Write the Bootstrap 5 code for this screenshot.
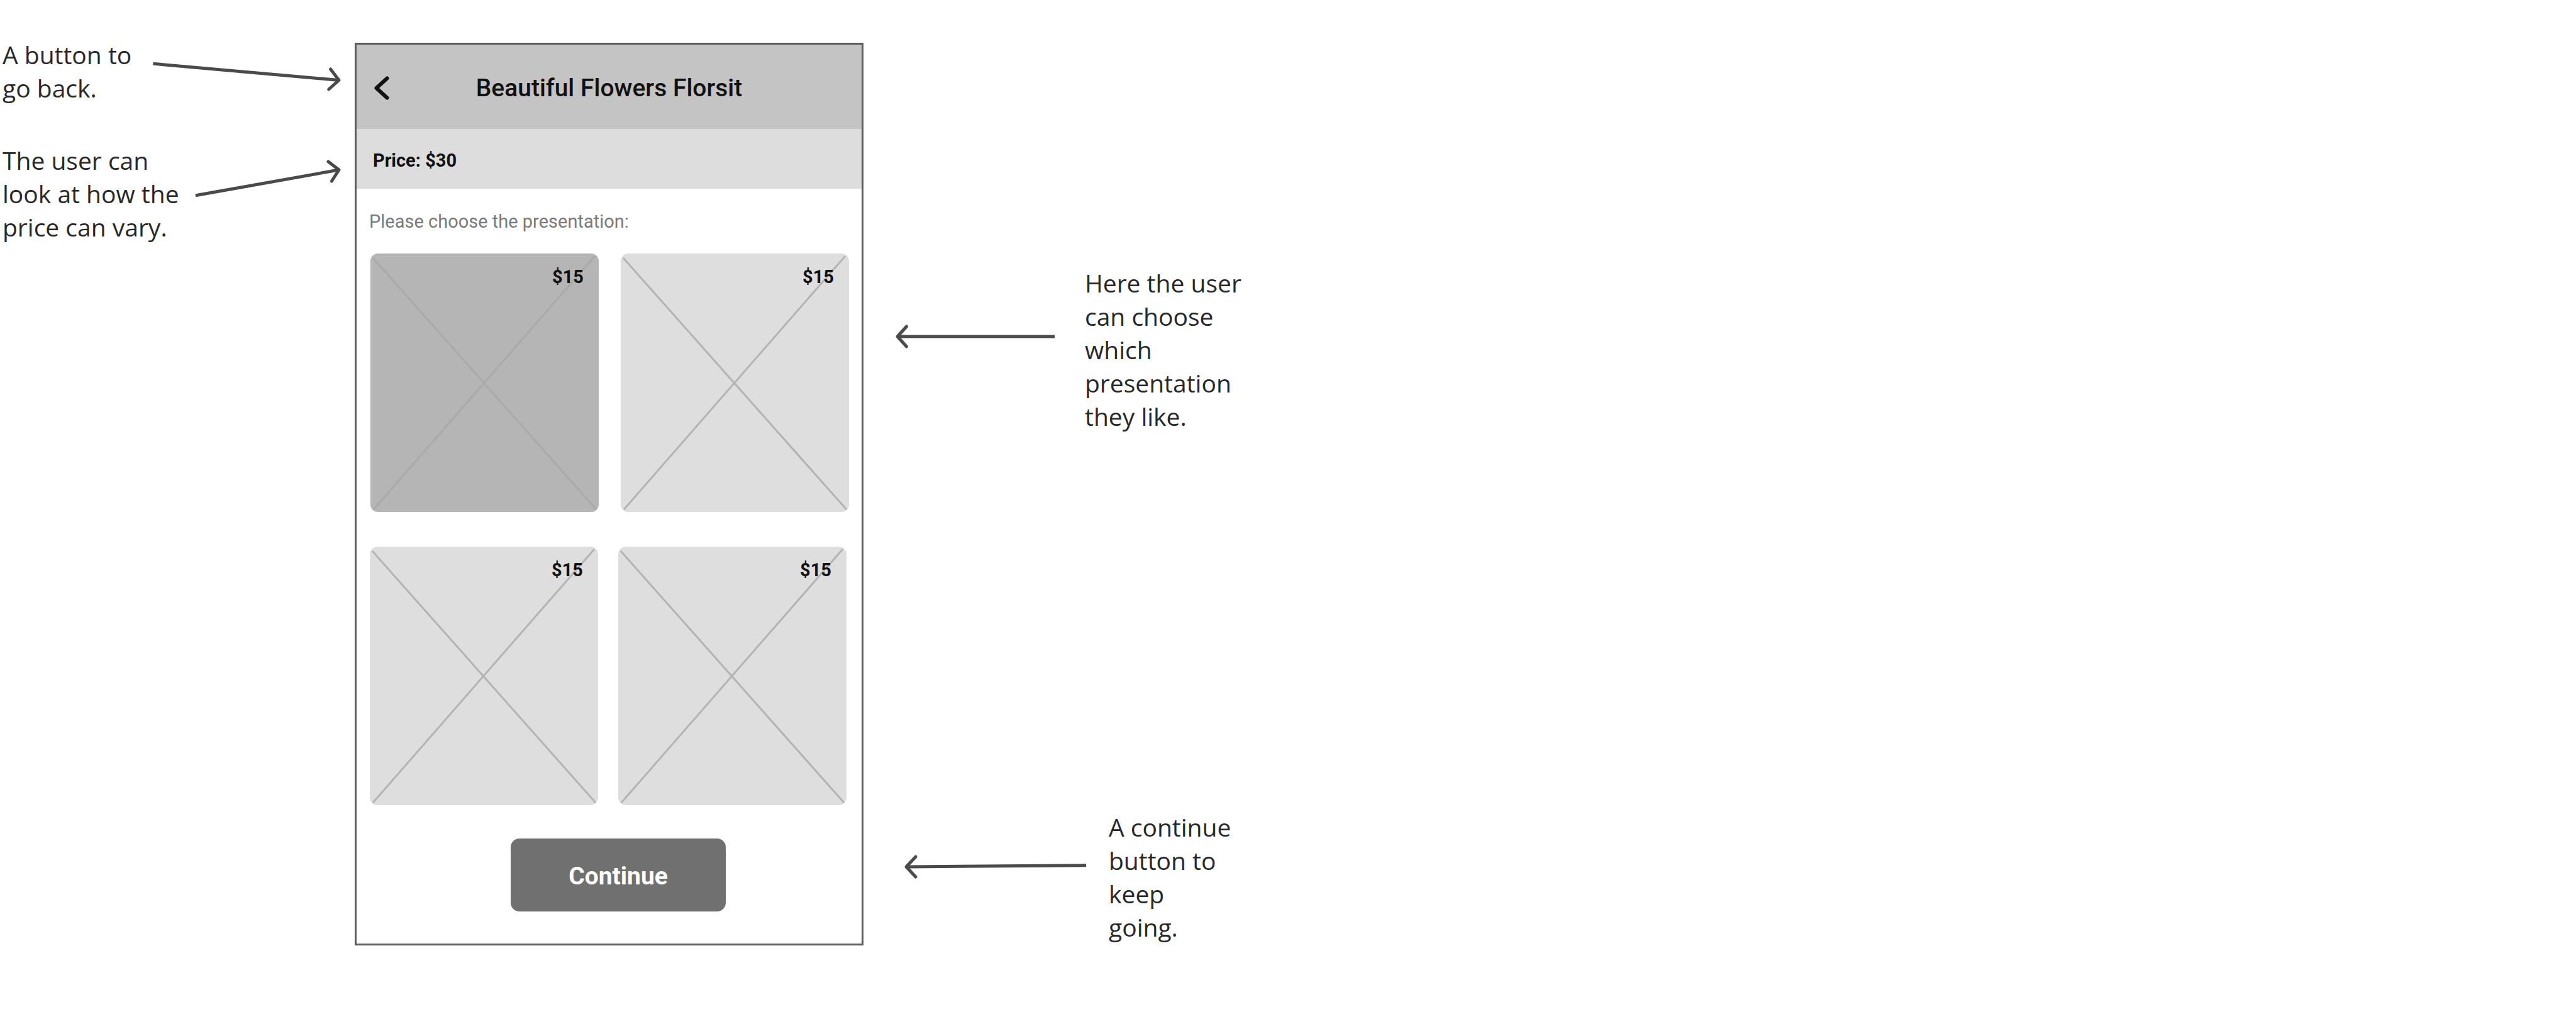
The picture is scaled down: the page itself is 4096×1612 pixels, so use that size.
<!DOCTYPE html>
<html lang="en">
<head>
<meta charset="utf-8">
<meta name="viewport" content="width=device-width, initial-scale=1">
<title>Beautiful Flowers Florsit</title>
<link href="https://cdn.jsdelivr.net/npm/bootstrap@5.3.0/dist/css/bootstrap.min.css" rel="stylesheet">
<style>
  body { background: #fff; }
  .board { display: grid; grid-template-columns: minmax(564px, 564fr) minmax(809px, 809fr) minmax(600px, 2723fr); align-items: start; min-height: 100vh; }

  /* Annotations beside the phone */
  .notes-left { padding: 60px 0 0 4px; gap: 62px; }
  .notes-right { padding-top: 423px; gap: 600px; }
  .note-text { font: 400 39px/53px "Open Sans", sans-serif; color: #282828; white-space: nowrap; }
  .note-back { width: 236px; }
  .note-price { width: 300px; }
  .note-choose { padding-left: 48px; }
  .note-continue { padding-left: 62px; }
  .arrow { flex: none; fill: none; stroke: #4a4a4a; stroke-width: 5; stroke-linejoin: round; }
  .arrow .tip { stroke-linecap: round; }

  /* Phone */
  .phone { margin-top: 68px; border: 3px solid #5c5c5c; background: #fff; font-family: Roboto, sans-serif; color: #111; }
  .topbar { height: 134px; padding: 4px 27px 0; background: #c4c4c4; }
  .topbar h1 { font-size: 39px; line-height: 46px; font-weight: 500; }
  .topbar-side { width: 26px; }
  .back { color: #111; line-height: 0; }
  .price { height: 95px; padding: 6px 26px 0; background: #ddd; font-size: 29px; font-weight: 700; }
  .prompt { padding: 35px 20px 34px; font-size: 29px; line-height: 34px; color: #7a7a7a; }
  .choices-top { gap: 35px; padding: 0 20px 0 22px; margin-bottom: 55px; }
  .choices-bottom { gap: 32px; padding: 0 24px 0 21px; margin-bottom: 53px; }
  .choice { flex: 1 1 0; height: 411px; border-radius: 12px; background: #dedede; color: #111; overflow: hidden; }
  .choice svg { stroke: #b4b4b4; stroke-width: 3; }
  .choice[aria-pressed="true"] { background: #b5b5b5; }
  .choice[aria-pressed="true"] svg { stroke: #aaa; }
  .choice-price { top: 20px; right: 24px; font-size: 29px; line-height: 34px; font-weight: 700; }
  .action { padding-left: 29px; margin-bottom: 51px; }
  .continue { width: 342px; height: 116px; padding: 4px 0 0; border: 0; border-radius: 14px; font-size: 39px; font-weight: 700;
    --bs-btn-color: #fff; --bs-btn-bg: #707070; --bs-btn-hover-color: #fff; --bs-btn-hover-bg: #606060; --bs-btn-active-color: #fff; --bs-btn-active-bg: #555; }
</style>
</head>
<body>
<main class="board">

  <aside class="notes-left d-flex flex-column">
    <div class="d-flex">
      <p class="note-text note-back mb-0">A button to<br>go back.</p>
      <svg class="arrow" width="304" height="106" viewBox="0 0 304 106" aria-hidden="true">
        <path d="M3.4 41.2 299 67.5"/><path class="tip" d="M285.6 50 299 67.5 282.7 82"/>
      </svg>
    </div>
    <div class="d-flex">
      <p class="note-text note-price mb-0">The user can<br>look at how the<br>price can vary.</p>
      <svg class="arrow" width="240" height="159" viewBox="0 0 240 159" aria-hidden="true">
        <path d="M6.9 82.8 235 42"/><path class="tip" d="M218 29 235 42 223.4 60"/>
      </svg>
    </div>
  </aside>

  <section class="phone">
    <header class="topbar d-flex align-items-center">
      <button type="button" class="back topbar-side btn p-0 border-0" aria-label="Back">
        <svg width="26" height="38" viewBox="0 0 26 38" fill="none" stroke="currentColor" stroke-width="6" stroke-linecap="round" stroke-linejoin="round" aria-hidden="true"><path d="M21.5 3.5 4.5 19 21.5 34.5"/></svg>
      </button>
      <h1 class="flex-grow-1 text-center mb-0">Beautiful Flowers Florsit</h1>
      <span class="topbar-side"></span>
    </header>
    <div class="price d-flex align-items-center">Price: $30</div>
    <p class="prompt mb-0">Please choose the presentation:</p>

    <div class="choices-top d-flex">
      <button type="button" class="choice btn p-0 border-0 position-relative" aria-pressed="true">
        <svg class="d-block w-100 h-100" viewBox="0 0 363 411" preserveAspectRatio="none" aria-hidden="true"><path d="M4 7 359 407M357 4 5 407"/></svg>
        <span class="choice-price position-absolute">$15</span>
      </button>
      <button type="button" class="choice btn p-0 border-0 position-relative" aria-pressed="false">
        <svg class="d-block w-100 h-100" viewBox="0 0 363 411" preserveAspectRatio="none" aria-hidden="true"><path d="M4 7 359 407M357 4 5 407"/></svg>
        <span class="choice-price position-absolute">$15</span>
      </button>
    </div>
    <div class="choices-bottom d-flex">
      <button type="button" class="choice btn p-0 border-0 position-relative" aria-pressed="false">
        <svg class="d-block w-100 h-100" viewBox="0 0 363 411" preserveAspectRatio="none" aria-hidden="true"><path d="M4 7 359 407M357 4 5 407"/></svg>
        <span class="choice-price position-absolute">$15</span>
      </button>
      <button type="button" class="choice btn p-0 border-0 position-relative" aria-pressed="false">
        <svg class="d-block w-100 h-100" viewBox="0 0 363 411" preserveAspectRatio="none" aria-hidden="true"><path d="M4 7 359 407M357 4 5 407"/></svg>
        <span class="choice-price position-absolute">$15</span>
      </button>
    </div>

    <div class="action d-flex justify-content-center">
      <button type="button" class="continue btn">Continue</button>
    </div>
  </section>

  <aside class="notes-right d-flex flex-column">
    <div class="note-choose d-flex">
      <svg class="arrow" width="304" height="265" viewBox="0 0 304 265" aria-hidden="true">
        <path d="M256 112H6"/><path class="tip" d="M20.5 96 6 112 20.5 128"/>
      </svg>
      <p class="note-text mb-0">Here the user<br>can choose<br>which<br>presentation<br>they like.</p>
    </div>
    <div class="note-continue d-flex">
      <svg class="arrow" width="328" height="212" viewBox="0 0 328 212" aria-hidden="true">
        <path d="M292 87.7 6 90"/><path class="tip" d="M21 74 6 90 21 106"/>
      </svg>
      <p class="note-text mb-0">A continue<br>button to<br>keep<br>going.</p>
    </div>
  </aside>

</main>
<script src="https://cdn.jsdelivr.net/npm/bootstrap@5.3.0/dist/js/bootstrap.bundle.min.js"></script>
</body>
</html>
